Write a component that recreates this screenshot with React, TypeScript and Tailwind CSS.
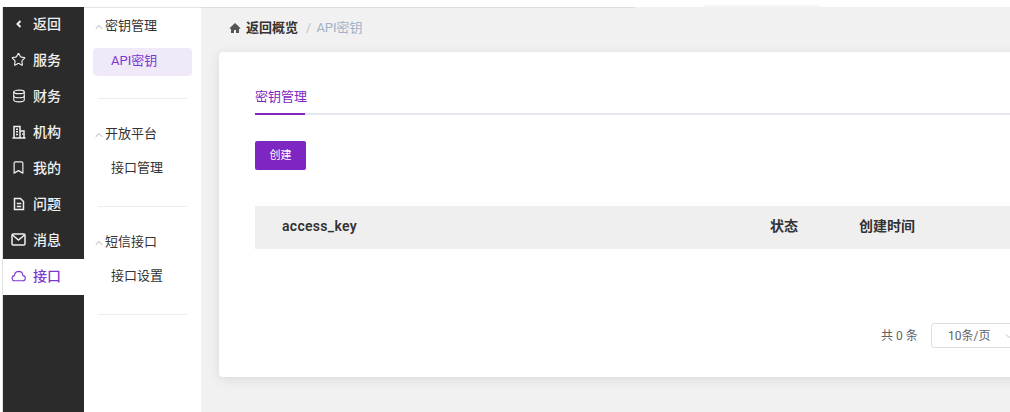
import React from "react";
import { Star, Database, Bookmark, ChevronUp, ChevronDown } from "lucide-react";

function Back() {
  return (
    <svg viewBox="0 0 10 10" width="10" height="10" fill="none" stroke="currentColor" strokeWidth="2">
      <path d="M6.5 2 3.5 5l3 3" />
    </svg>
  );
}
function Building() {
  return (
    <svg viewBox="0 0 14 14" width="14" height="14" fill="none" stroke="currentColor" strokeWidth="1.5">
      <path d="M2 13V1.5h6V13" />
      <path d="M8 6h4v7" />
      <path d="M0.5 13h13" />
      <path d="M4 4.2h2M4 6.8h2M4 9.4h2M10 9h1" />
    </svg>
  );
}
function Doc() {
  return (
    <svg viewBox="0 0 14 14" width="14" height="14" fill="none" stroke="currentColor" strokeWidth="1.5">
      <path d="M2.5 1.5h6l3 3v8h-9z" />
      <path d="M4.8 6.5h4.4M4.8 9.5h4.4" />
    </svg>
  );
}
function Envelope() {
  return (
    <svg viewBox="0 0 15 13" width="15" height="13" fill="none" stroke="currentColor" strokeWidth="1.5">
      <rect x="1" y="1" width="13" height="11" rx="1.2" />
      <path d="M1.5 2 7.5 7 13.5 2" />
    </svg>
  );
}
function CloudShape() {
  return (
    <svg viewBox="0 0 15 12" width="15" height="12" fill="none" stroke="currentColor" strokeWidth="1.1">
      <path d="M4 10.8h7.5a2.6 2.6 0 0 0 .4-5.2A4.4 4.4 0 0 0 7.6 1.4 4.4 4.4 0 0 0 3.5 5.6 2.6 2.6 0 0 0 4 10.8z" />
    </svg>
  );
}
function Home() {
  return (
    <svg viewBox="0 0 12 12" width="12" height="12" fill="#555555">
      <path d="M6 1 .5 6.2l.8.8L2 6.4V11h3V8h2v3h3V6.4l.7.6.8-.8z" />
    </svg>
  );
}

const nav = [
  { label: "返回", icon: <Back /> },
  { label: "服务", icon: <Star size={15} strokeWidth={1.8} /> },
  { label: "财务", icon: <Database size={14} strokeWidth={1.9} /> },
  { label: "机构", icon: <Building /> },
  { label: "我的", icon: <Bookmark size={15} strokeWidth={1.9} /> },
  { label: "问题", icon: <Doc /> },
  { label: "消息", icon: <Envelope /> },
  { label: "接口", icon: <CloudShape />, active: true },
];

const groups = [
  { title: "密钥管理", items: [{ label: "API密钥", active: true }] },
  { title: "开放平台", items: [{ label: "接口管理" }] },
  { title: "短信接口", items: [{ label: "接口设置" }] },
];

export default function App() {
  return (
    <div className="h-[412px] w-[1010px] overflow-hidden bg-white flex flex-col font-['Roboto','Noto_Sans_CJK_SC',sans-serif] text-[13px]">
      <div className="h-[7px] shrink-0 bg-white pl-[703px] pt-[3px]">
        <div className="w-[117px] h-1 bg-gradient-to-b from-white to-[#f5f5f5]" />
      </div>
      <div className="flex flex-1 min-h-0">
        <div className="w-[3px] shrink-0 bg-white border-r border-[#e2e2e2]" />
        <aside className="w-[81px] shrink-0 bg-[#2b2b2b]">
          {nav.map(({ label, icon, active }) => (
            <div
              key={label}
              className={`h-9 flex items-center pb-[3px] ${active ? "bg-white text-[#7d38d0]" : "text-[#f0f0f0]"}`}
            >
              <span className="w-[30px] pl-px flex justify-center">{icon}</span>
              <span className="text-[14px] leading-none font-medium">{label}</span>
            </div>
          ))}
        </aside>
        <nav className="w-[117px] shrink-0 bg-white border-t border-[#e4e4e4] pl-[9px] pr-[9px] pt-[8px] text-[#333333]">
          {groups.map((g) => (
            <div key={g.title} className="h-[108px]">
              <div className="h-5 flex items-center pb-px">
                <ChevronUp size={12} strokeWidth={1.2} className="text-[#777777] mt-[3px]" />
                <span className="leading-none">{g.title}</span>
              </div>
              <div className="mt-[12px] flex flex-col">
                {g.items.map((it) => (
                  <div
                    key={it.label}
                    className={`h-7 pl-[18px] flex items-center rounded ${it.active ? "pb-[2px] bg-[#f0e9f9] text-[#7d38d0]" : "pb-[4px]"}`}
                  >
                    {it.label}
                  </div>
                ))}
              </div>
              <div className="mx-[5px] mt-[22px] h-px bg-[#edecf5]" />
            </div>
          ))}
        </nav>
        <main className="flex-1 min-w-0 bg-[#f1f1f1] pl-[18px]">
          <div className="h-px w-[434px] -ml-[18px] bg-[#dedede]" />
          <div className="h-[44px] pl-[10px] flex items-center pb-[4px]">
            <Home />
            <span className="font-semibold text-[#333333] ml-[5px]">返回概览</span>
            <span className="text-[#c0c4cc] ml-[8px]">/</span>
            <span className="text-[#a3b1c6] ml-[5px]">API密钥</span>
          </div>
          <section className="w-[900px] h-[325px] bg-white rounded-[4px] shadow-[0_2px_12px_rgba(0,0,0,0.1)] pl-9 pt-[32px]">
            <div className="h-[31px] border-b-2 border-[#e5e7ef]">
              <div className="w-[50px] h-[31px] border-b-2 border-[#7d26c2] text-[#7d26c2] whitespace-nowrap leading-[26px]">
                密钥管理
              </div>
            </div>
            <button className="mt-[26px] block w-[51px] h-[29px] pt-px bg-[#7d26c2] rounded-[2px] text-white text-[11px]">
              创建
            </button>
            <div className="mt-9 h-[43px] bg-[#efefef] grid grid-cols-[488px_89px_1fr] pl-[27px] pb-[3px] items-center font-semibold text-[14px] text-[#333333]">
              <span className="tracking-[0.3px]">access_key</span>
              <span>状态</span>
              <span>创建时间</span>
            </div>
            <div className="mt-[74px] flex items-center pl-[626px] text-[#606266] text-[12px]">
              <span className="w-[50px] whitespace-nowrap">共 0 条</span>
              <div className="w-[100px] h-[25px] border border-[#dcdfe6] rounded-[3px] flex items-center pl-[16px] gap-[13px]">
                <span>10条/页</span>
                <ChevronDown size={12} className="text-[#c0c4cc]" />
              </div>
            </div>
          </section>
        </main>
      </div>
    </div>
  );
}
